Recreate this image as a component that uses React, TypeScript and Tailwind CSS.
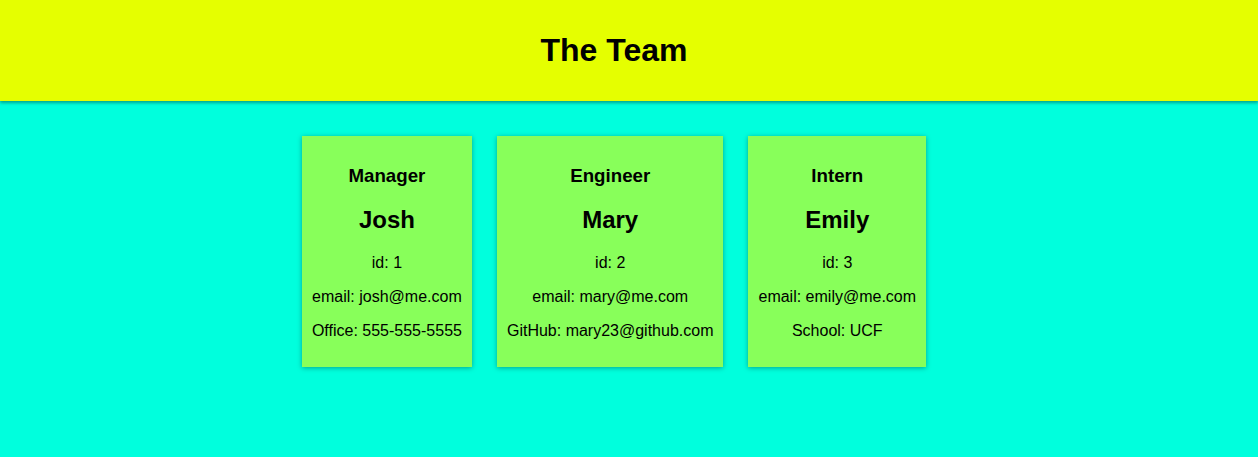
const team = [
  {
    role: "Manager",
    name: "Josh",
    id: 1,
    email: "josh@me.com",
    extra: "Office: 555-555-5555",
  },
  {
    role: "Engineer",
    name: "Mary",
    id: 2,
    email: "mary@me.com",
    extra: "GitHub: mary23@github.com",
  },
  {
    role: "Intern",
    name: "Emily",
    id: 3,
    email: "emily@me.com",
    extra: "School: UCF",
  },
];

function Card({ member }: { member: (typeof team)[number] }) {
  return (
    <div className="bg-[#88ff5a] p-[10px] text-center shadow-[0_1px_5px_rgba(0,0,0,0.35)]">
      <h3 className="mt-[18.72px] text-[18.72px] font-bold leading-[1.15]">{member.role}</h3>
      <h2 className="mt-[19.92px] text-[24px] font-bold leading-[1.15]">{member.name}</h2>
      <p className="mt-[19.92px] text-base leading-[1.15]">id: {member.id}</p>
      <p className="mt-4 text-base leading-[1.15]">email: {member.email}</p>
      <p className="mt-4 mb-4 text-base leading-[1.15]">{member.extra}</p>
    </div>
  );
}

export default function App() {
  return (
    <div className="min-h-[457px] bg-[#00ffdd] font-['Liberation_Sans',Arial,sans-serif] text-black">
      {/* header */}
      <header className="relative flex h-[101px] items-center justify-center bg-[#e5ff00] pr-[30px] shadow-[0_2px_3px_rgba(0,0,0,0.35)]">
        <h1 className="text-[32px] font-bold leading-[1.15]">The Team</h1>
      </header>

      {/* cards */}
      <main className="flex items-start justify-center gap-[25px] pt-[35px] pr-[30px]">
        {team.map((m) => (
          <Card key={m.id} member={m} />
        ))}
      </main>
    </div>
  );
}
